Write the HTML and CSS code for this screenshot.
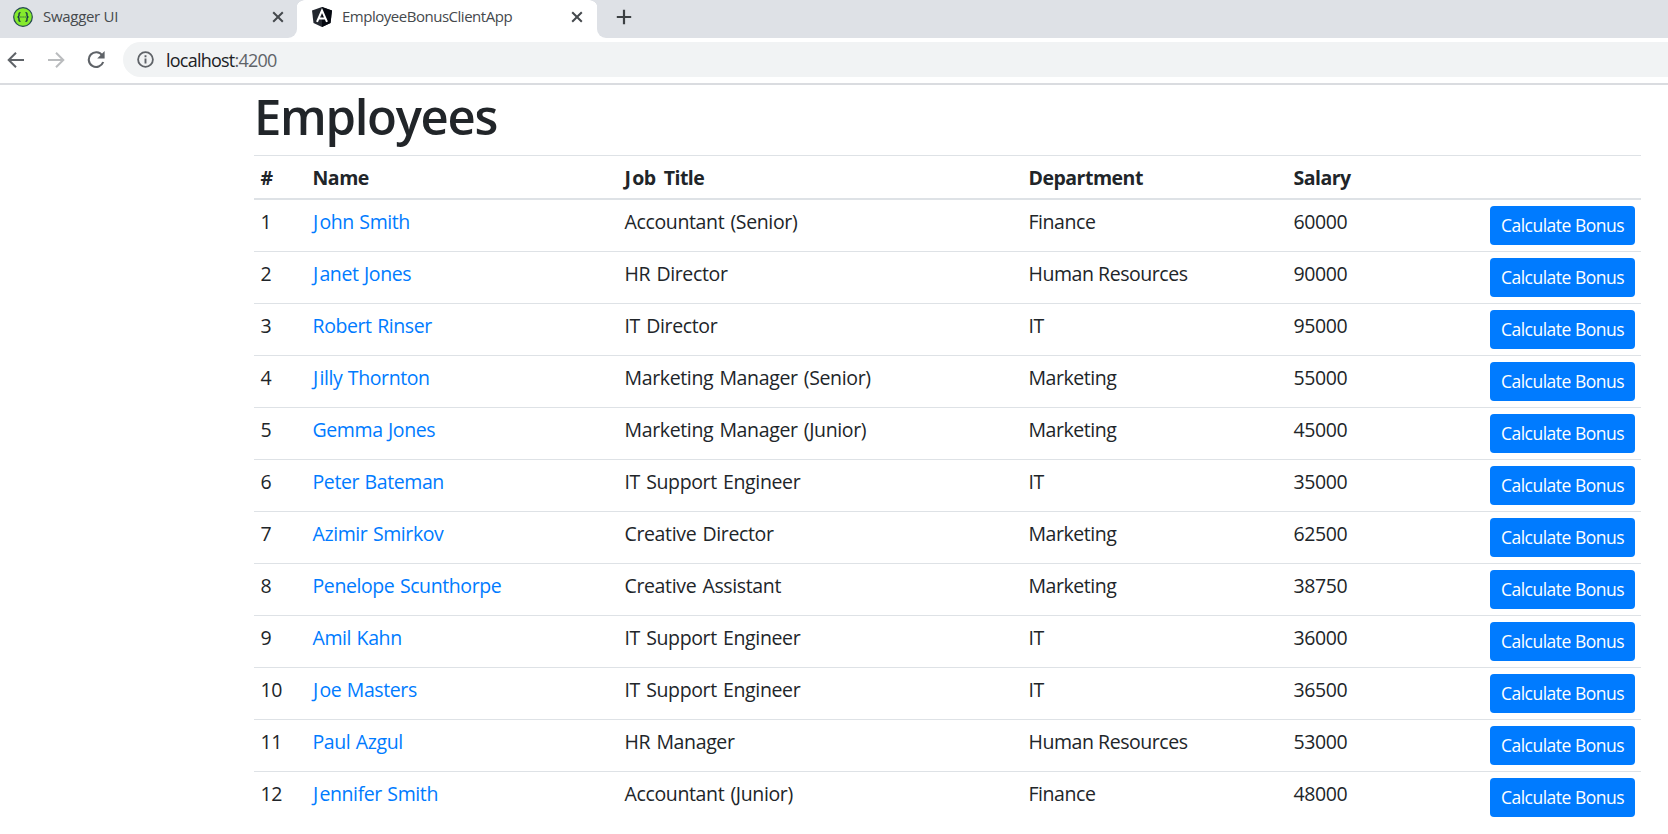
FILE: index.html
```html
<!DOCTYPE html>
<html lang="en">
<head>
<meta charset="utf-8">
<title>EmployeeBonusClientApp</title>
<link rel="stylesheet" href="styles.css">
</head>
<body>
<header class="browser">
  <div class="tabs">
    <div class="tab tab-first">
      <svg class="favicon" width="20" height="20" viewBox="0 0 20 20"><circle cx="10" cy="10" r="9.3" fill="#85ea2d" stroke="#254a50" stroke-width="1.2"/><path d="M7.5 5.7Q6 5.5 6 7V8.6Q6 10 4.5 10Q6 10 6 11.4V13Q6 14.5 7.5 14.3M12.5 5.7Q14 5.5 14 7V8.6Q14 10 15.5 10Q14 10 14 11.4V13Q14 14.5 12.5 14.3" fill="none" stroke="#173647" stroke-width="1.4"/><path d="M7.4 10h1.1M9.5 10h1.1M11.6 10h1.1" stroke="#173647" stroke-width="1.2"/></svg>
      <span class="tab-title title-swagger">Swagger UI</span>
      <svg class="close" width="12" height="12" viewBox="0 0 12 12"><path d="M1.2 1.2l9.6 9.6M10.8 1.2L1.2 10.8" stroke="#45494d" stroke-width="2"/></svg>
    </div>
    <div class="tab tab-active">
      <svg class="favicon" width="20" height="20" viewBox="0 0 20 20"><path d="M10 0L20 3.4L18.5 16L10 20L1.5 16L0 3.4Z" fill="#23272f"/><path d="M10 0L20 3.4L18.5 16L10 20Z" fill="#050810"/><path d="M5 14.8L10 3.5L15 14.8M6.8 11.6H13.2" fill="none" stroke="#fff" stroke-width="2"/></svg>
      <span class="tab-title title-app">EmployeeBonusClientApp</span>
      <svg class="close" width="12" height="12" viewBox="0 0 12 12"><path d="M1.2 1.2l9.6 9.6M10.8 1.2L1.2 10.8" stroke="#45494d" stroke-width="2"/></svg>
    </div>
    <div class="tab-rest">
      <svg width="16" height="16" viewBox="0 0 16 16"><path d="M8 .8v14.4M.8 8h14.4" stroke="#3c4043" stroke-width="2.2"/></svg>
    </div>
  </div>
  <div class="toolbar">
    <svg class="nav" width="18" height="18" viewBox="0 0 18 18"><path d="M17 9H2M9 1.7L1.7 9L9 16.3" fill="none" stroke="#5f6368" stroke-width="2"/></svg>
    <svg class="nav" width="18" height="18" viewBox="0 0 18 18"><path d="M1 9H16M9 1.7L16.3 9L9 16.3" fill="none" stroke="#babcbe" stroke-width="2"/></svg>
    <svg class="nav" width="18" height="18" viewBox="0 0 18 18"><path d="M15.3 4.4A7.4 7.4 0 1 0 16.2 11" fill="none" stroke="#5f6368" stroke-width="2.1"/><path d="M17.6 0V7.5H10.2Z" fill="#5f6368"/></svg>
    <div class="address">
      <svg width="17" height="17" viewBox="0 0 17 17"><circle cx="8.5" cy="8.5" r="7.4" fill="none" stroke="#5f6368" stroke-width="1.8"/><path d="M8.5 7.6v5M8.5 4.3v1.9" stroke="#5f6368" stroke-width="1.9"/></svg>
      <span class="url">localhost<span class="port">:4200</span></span>
    </div>
  </div>
</header>
<main class="container">
  <h1>Employees</h1>
  <table>
    <colgroup><col class="c-id"><col class="c-name"><col class="c-job"><col class="c-dept"><col class="c-salary"><col></colgroup>
    <thead><tr><th>#</th><th>Name</th><th class="wide-cap">Job Title</th><th>Department</th><th>Salary</th><th></th></tr></thead>
    <tbody>
      <tr><td>1</td><td><a class="wide-cap">John Smith</a></td><td>Accountant (Senior)</td><td>Finance</td><td>60000</td><td><button>Calculate Bonus</button></td></tr>
      <tr><td>2</td><td><a class="wide-cap">Janet Jones</a></td><td>HR Director</td><td>Human Resources</td><td>90000</td><td><button>Calculate Bonus</button></td></tr>
      <tr><td>3</td><td><a>Robert Rinser</a></td><td>IT Director</td><td>IT</td><td>95000</td><td><button>Calculate Bonus</button></td></tr>
      <tr><td>4</td><td><a class="wide-cap">Jilly Thornton</a></td><td>Marketing Manager (Senior)</td><td>Marketing</td><td>55000</td><td><button>Calculate Bonus</button></td></tr>
      <tr><td>5</td><td><a>Gemma Jones</a></td><td>Marketing Manager (Junior)</td><td>Marketing</td><td>45000</td><td><button>Calculate Bonus</button></td></tr>
      <tr><td>6</td><td><a>Peter Bateman</a></td><td>IT Support Engineer</td><td>IT</td><td>35000</td><td><button>Calculate Bonus</button></td></tr>
      <tr><td>7</td><td><a>Azimir Smirkov</a></td><td>Creative Director</td><td>Marketing</td><td>62500</td><td><button>Calculate Bonus</button></td></tr>
      <tr><td>8</td><td><a>Penelope Scunthorpe</a></td><td>Creative Assistant</td><td>Marketing</td><td>38750</td><td><button>Calculate Bonus</button></td></tr>
      <tr><td>9</td><td><a>Amil Kahn</a></td><td>IT Support Engineer</td><td>IT</td><td>36000</td><td><button>Calculate Bonus</button></td></tr>
      <tr><td>10</td><td><a class="wide-cap">Joe Masters</a></td><td>IT Support Engineer</td><td>IT</td><td>36500</td><td><button>Calculate Bonus</button></td></tr>
      <tr><td>11</td><td><a>Paul Azgul</a></td><td>HR Manager</td><td>Human Resources</td><td>53000</td><td><button>Calculate Bonus</button></td></tr>
      <tr><td>12</td><td><a class="wide-cap">Jennifer Smith</a></td><td>Accountant (Junior)</td><td>Finance</td><td>48000</td><td><button>Calculate Bonus</button></td></tr>
    </tbody>
  </table>
</main>
</body>
</html>
```
FILE: styles.css
```css
* { box-sizing: border-box; }
body {
  margin: 0;
  height: 834px;
  overflow: hidden;
  background: #fff;
  color: #212529;
  font-family: "Open Sans", "Noto Sans", sans-serif;
}
svg { display: block; flex: none; }

.tabs { display: flex; height: 38px; background: #fff; }
.tab { display: flex; align-items: center; height: 38px; padding-bottom: 4px; }
.tab-first { width: 297px; padding-left: 13px; padding-right: 13px; background: #dee1e6; border-bottom-right-radius: 9px; }
.tab-active { width: 300px; padding-left: 15px; padding-right: 14px; position: relative; }
.tab-active::before, .tab-active::after {
  content: "";
  position: absolute;
  top: 0;
  width: 9px;
  height: 9px;
}
.tab-active::before { left: -1px; background: radial-gradient(circle at 100% 100%, transparent 8.5px, #dee1e6 9px); }
.tab-active::after { right: -1px; background: radial-gradient(circle at 0 100%, transparent 8.5px, #dee1e6 9px); }
.tab-rest { display: flex; flex: 1; padding: 9px 0 0 19px; background: #dee1e6; border-bottom-left-radius: 9px; }
.tab-title { font-size: 15px; line-height: 20px; color: #45494d; white-space: nowrap; }
.tab .tab-title { margin-left: 10px; padding-bottom: 2px; flex: 1; }
.title-swagger { letter-spacing: -.3px; }
.title-app { letter-spacing: -.48px; }

.toolbar {
  display: flex;
  align-items: center;
  height: 47px;
  padding: 0 0 2px 7px;
  border-bottom: 2px solid #dadce0;
}
.nav { margin-right: 22px; }
.address {
  display: flex;
  align-items: center;
  flex: 1;
  height: 35px;
  margin-left: -4px;
  padding-left: 14px;
  background: #f1f3f4;
  border-radius: 18px 0 0 18px;
}
.url { margin-left: 12px; padding-top: 1px; font-size: 18px; line-height: 24px; letter-spacing: -.77px; color: #202124; }
.port { color: #5f6368; }

.container { width: 1387px; margin-left: 254px; }
h1 { margin: 0; height: 70px; font-size: 49px; line-height: 62px; font-weight: 600; letter-spacing: -1.3px; }
table { width: 1387px; table-layout: fixed; border-collapse: separate; border-spacing: 0; font-size: 19.5px; line-height: 30px; letter-spacing: -.4px; }
.c-id { width: 52px; }
.c-name { width: 312px; }
.c-job { width: 404px; }
.c-dept { width: 265px; }
.c-salary { width: 197px; }
th { height: 45px; padding: 7px 6px 5px 6.5px; border-top: 1px solid #dee2e6; border-bottom: 2px solid #dee2e6; text-align: left; font-weight: 700; letter-spacing: -.5px; word-spacing: 3.5px; }
td { height: 52px; padding: 7px 6px 5px 6.5px; border-top: 1px solid #dee2e6; vertical-align: top; white-space: nowrap; }
td:nth-child(2) { word-spacing: .8px; }
td:nth-child(3) { word-spacing: 1.5px; letter-spacing: -.36px; }
td:nth-child(4) { letter-spacing: -.45px; }
td:last-child { padding: 6px; }
tbody tr:first-child td { height: 51px; border-top: 0; }
a { color: #007bff; }
a.wide-cap { display: inline-block; margin-left: .5px; }
.wide-cap::first-letter { letter-spacing: 1.2px; }
button {
  display: block;
  width: 145px;
  height: 39px;
  padding: 0 0 1px;
  border: 0;
  border-radius: 4px;
  background: #007bff;
  color: #fff;
  font: 17.5px/37px "Open Sans", "Noto Sans", sans-serif;
  letter-spacing: -.5px;
}
```
